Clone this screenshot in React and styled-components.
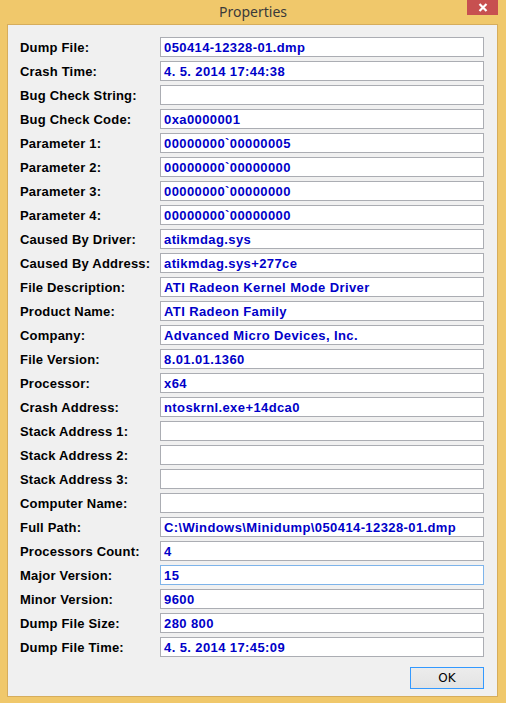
import React from 'react'
import styled, { createGlobalStyle } from 'styled-components'

const fields = [
  ['Dump File:', '050414-12328-01.dmp'],
  ['Crash Time:', '4. 5. 2014 17:44:38'],
  ['Bug Check String:', ''],
  ['Bug Check Code:', '0xa0000001'],
  ['Parameter 1:', '00000000`00000005'],
  ['Parameter 2:', '00000000`00000000'],
  ['Parameter 3:', '00000000`00000000'],
  ['Parameter 4:', '00000000`00000000'],
  ['Caused By Driver:', 'atikmdag.sys'],
  ['Caused By Address:', 'atikmdag.sys+277ce'],
  ['File Description:', 'ATI Radeon Kernel Mode Driver'],
  ['Product Name:', 'ATI Radeon Family'],
  ['Company:', 'Advanced Micro Devices, Inc.'],
  ['File Version:', '8.01.01.1360'],
  ['Processor:', 'x64'],
  ['Crash Address:', 'ntoskrnl.exe+14dca0'],
  ['Stack Address 1:', ''],
  ['Stack Address 2:', ''],
  ['Stack Address 3:', ''],
  ['Computer Name:', ''],
  ['Full Path:', 'C:\\Windows\\Minidump\\050414-12328-01.dmp'],
  ['Processors Count:', '4'],
  ['Major Version:', '15', true],
  ['Minor Version:', '9600'],
  ['Dump File Size:', '280 800'],
  ['Dump File Time:', '4. 5. 2014 17:45:09'],
]

const Global = createGlobalStyle`
  html, body { margin: 0; padding: 0; }
  body { width: 506px; height: 703px; overflow: hidden; }
`

const Frame = styled.div`
  width: 506px;
  height: 703px;
  background: #f0c86b;
  display: flex;
  flex-direction: column;
  box-sizing: border-box;
`

const TitleBar = styled.div`
  height: 24px;
  position: relative;
  display: flex;
  align-items: center;
  justify-content: center;
  font-family: "Noto Sans", "Open Sans", sans-serif;
  font-size: 14px;
  color: #3a3a3a;
  padding-bottom: 2px;
  box-sizing: border-box;
`

const CloseBtn = styled.div`
  position: absolute;
  top: 0;
  right: 8px;
  width: 31px;
  height: 15px;
  background: #c75050;
  display: flex;
  align-items: center;
  justify-content: center;
`

const Client = styled.div`
  flex: 1;
  margin: 0 8px 6px 7px;
  border: 1px solid #d6ad5c;
  background: #f0f0f0;
  padding: 12px 13px 0 12px;
  display: flex;
  flex-direction: column;
  font-family: "Liberation Sans", Arial, sans-serif;
  font-weight: bold;
  font-size: 13px;
  letter-spacing: 0.2px;
`

const Grid = styled.div`
  display: grid;
  grid-template-columns: 140px 324px;
  row-gap: 4px;
`

const Label = styled.div`
  height: 20px;
  display: flex;
  align-items: center;
  color: #000;
`

const Field = styled.div`
  height: 20px;
  box-sizing: border-box;
  border: 1px solid ${p => (p.$focused ? '#7eb4ea' : '#abadb3')};
  background: #fff;
  color: #0000c8;
  padding-left: 3px;
  letter-spacing: 0.4px;
  display: flex;
  align-items: center;
  white-space: nowrap;
  overflow: hidden;
`

const Footer = styled.div`
  display: flex;
  justify-content: flex-end;
  margin-top: 10px;
`

const OkButton = styled.button`
  width: 74px;
  height: 22px;
  box-sizing: border-box;
  border: 1px solid #3399ff;
  background: linear-gradient(#ececec, #e3e3e3);
  font-family: "DejaVu Sans", Tahoma, sans-serif;
  font-size: 12px;
  font-weight: normal;
  color: #000;
  padding: 0;
  margin: 0;
`

export default function App() {
  return (
    <>
      <Global />
      <Frame>
        <TitleBar>
          Properties
          <CloseBtn>
            <svg width="10" height="9" viewBox="0 0 10 9">
              <path d="M1.5 1 L8.5 8 M8.5 1 L1.5 8" stroke="#fff" strokeWidth="2.2" />
            </svg>
          </CloseBtn>
        </TitleBar>
        <Client>
          <Grid>
            {fields.map(([label, value, focused]) => (
              <React.Fragment key={label}>
                <Label>{label}</Label>
                <Field $focused={focused}>{value}</Field>
              </React.Fragment>
            ))}
          </Grid>
          <Footer>
            <OkButton>OK</OkButton>
          </Footer>
        </Client>
      </Frame>
    </>
  )
}
